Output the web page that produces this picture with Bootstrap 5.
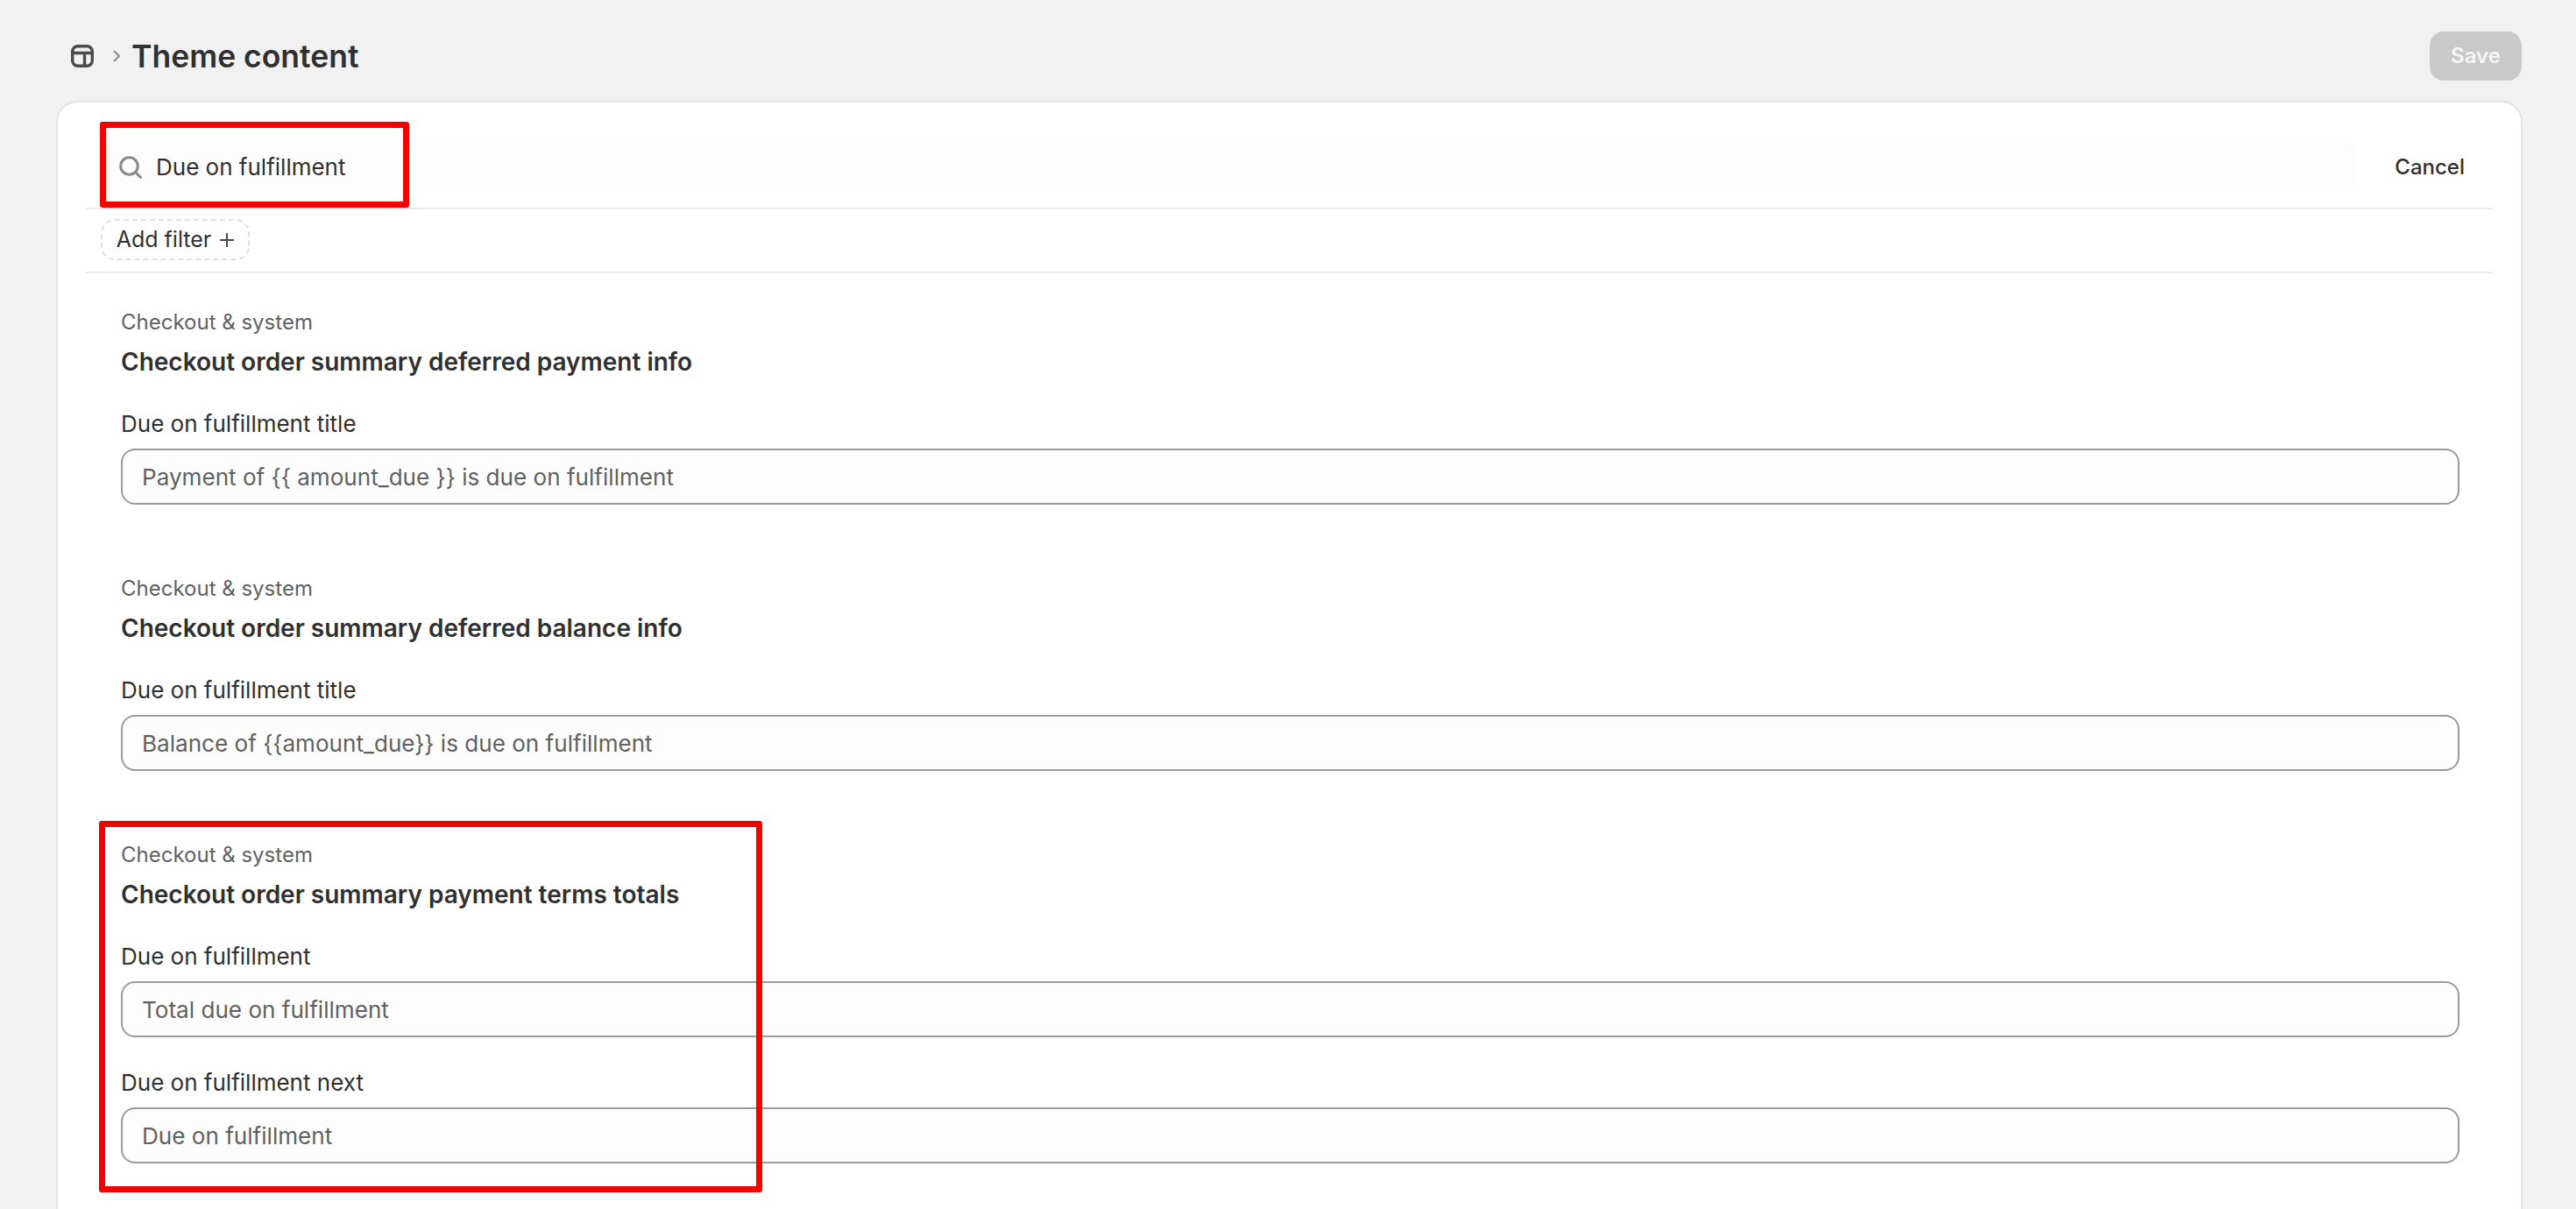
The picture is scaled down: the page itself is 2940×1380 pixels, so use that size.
<!DOCTYPE html>
<html lang="en">
<head>
<meta charset="utf-8">
<title>Theme content</title>
<link href="https://cdn.jsdelivr.net/npm/bootstrap@5.3.0/dist/css/bootstrap.min.css" rel="stylesheet">
<style>
html,body{height:100%;overflow:hidden}
body{background:#f1f1f1;font-family:Inter,"Liberation Sans",sans-serif;color:#303030;font-size:26px;line-height:36px}
.page-wrap{padding:36px 61px 0 64px;height:100%;overflow:hidden}
.top-bar{height:56px;margin-bottom:23px;padding-left:17px;padding-right:1px}
.crumb-title{font-size:35.5px;font-weight:600;line-height:56px;margin:1px 0 0;color:#303030}
.crumb-chev{margin:0 13px 0 22px}
.save-btn{width:105px;height:56px;border-radius:16px;background:#c9c9c9;color:#f5f5f5;border:0;font-size:24px;font-weight:600;padding:0}
.main-panel{background:#fff;border:2px solid #e3e3e3;border-bottom:0;border-radius:24px 24px 0 0;padding:0 32px;height:1400px}
.search-row{position:relative;padding:46px 32px 19px 17px;height:122px;border-bottom:2px solid #ebebeb}
.search-field{background:#fdfdfd;height:55px;padding-left:21px;border-radius:8px}
.search-input{border:0;background:transparent;outline:0;font:inherit;color:#303030;flex:1;padding:0;margin-left:16px}
.cancel-btn{background:none;border:0;padding:0;margin-left:42px;color:#303030;font-weight:500;font-size:24px}
.filter-row{padding:11px 17px 13px;border-bottom:2px solid #ebebeb}
.filter-btn{height:47px;width:170px;border:2px dashed #e0e0e0;border-radius:16px;background:#fff;color:#303030;padding:0;font-size:25px;line-height:1}
.plus-mark{margin-left:10px}
.theme-section{position:relative;padding:38px 38px 0 40px;height:304px}
.sec-eyebrow{color:#616161;font-size:24px;line-height:36px;margin-bottom:9px}
.sec-heading{font-weight:600;font-size:28px;line-height:36px;margin:0 0 35px;color:#303030}
.field-label{display:block;margin-bottom:10px;line-height:36px;color:#303030}
.theme-input.form-control{height:64px;border:2px solid #9a9a9a;border-radius:16px;background:#fdfdfd;color:#616161;font-size:26.1px;padding:0 22px;box-shadow:none}
.field-gap{margin-top:34px}
.red-frame{position:absolute;border:7px solid #f50000;border-radius:3px;pointer-events:none}
.red-search{left:16px;top:22px;width:353px;height:98px}
.red-section{left:15px;top:17px;width:757px;height:424px}
</style>
</head>
<body>
<div class="page-wrap">
  <header class="top-bar d-flex align-items-center justify-content-between">
    <div class="d-flex align-items-center">
      <svg width="26" height="26" viewBox="0 0 26 26" fill="none" stroke="#4a4a4a" stroke-width="3.4" aria-hidden="true"><rect x="1.7" y="1.7" width="22.6" height="22.6" rx="6"/><path d="M2 9.5H24M15.5 9.5V24"/></svg>
      <svg class="crumb-chev" width="8" height="14" viewBox="0 0 8 14" fill="none" stroke="#8a8a8a" stroke-width="2.2" aria-hidden="true"><path d="M1 1l6 6-6 6"/></svg>
      <h1 class="crumb-title">Theme content</h1>
    </div>
    <button class="save-btn" type="button" disabled>Save</button>
  </header>
  <main class="main-panel">
    <div class="search-row">
      <div class="d-flex align-items-center">
        <div class="search-field d-flex align-items-center flex-grow-1">
          <svg width="26" height="26" viewBox="0 0 26 26" fill="none" stroke="#8a8a8a" stroke-width="3" stroke-linecap="round" aria-hidden="true"><circle cx="11.5" cy="11.5" r="9.8"/><path d="M18.5 18.5L24.5 24.5"/></svg>
          <input class="search-input" type="text" value="Due on fulfillment" aria-label="Search">
        </div>
        <button class="cancel-btn" type="button">Cancel</button>
      </div>
      <div class="red-frame red-search"></div>
    </div>
    <div class="filter-row">
      <button class="filter-btn d-inline-flex align-items-center justify-content-center" type="button">Add filter<svg class="plus-mark" width="16" height="16" viewBox="0 0 16 16" fill="none" stroke="#4a4a4a" stroke-width="2" aria-hidden="true"><path d="M8 0V16M0 8H16"/></svg></button>
    </div>
    <section class="theme-section">
      <div class="sec-eyebrow">Checkout &amp; system</div>
      <h2 class="sec-heading">Checkout order summary deferred payment info</h2>
      <label class="field-label">Due on fulfillment title</label>
      <input class="form-control theme-input" type="text" value="Payment of {{ amount_due }} is due on fulfillment">
    </section>
    <section class="theme-section">
      <div class="sec-eyebrow">Checkout &amp; system</div>
      <h2 class="sec-heading">Checkout order summary deferred balance info</h2>
      <label class="field-label">Due on fulfillment title</label>
      <input class="form-control theme-input" type="text" value="Balance of {{amount_due}} is due on fulfillment">
    </section>
    <section class="theme-section">
      <div class="sec-eyebrow">Checkout &amp; system</div>
      <h2 class="sec-heading">Checkout order summary payment terms totals</h2>
      <label class="field-label">Due on fulfillment</label>
      <input class="form-control theme-input" type="text" value="Total due on fulfillment">
      <label class="field-label field-gap">Due on fulfillment next</label>
      <input class="form-control theme-input" type="text" value="Due on fulfillment">
      <div class="red-frame red-section"></div>
    </section>
  </main>
</div>
</body>
</html>
